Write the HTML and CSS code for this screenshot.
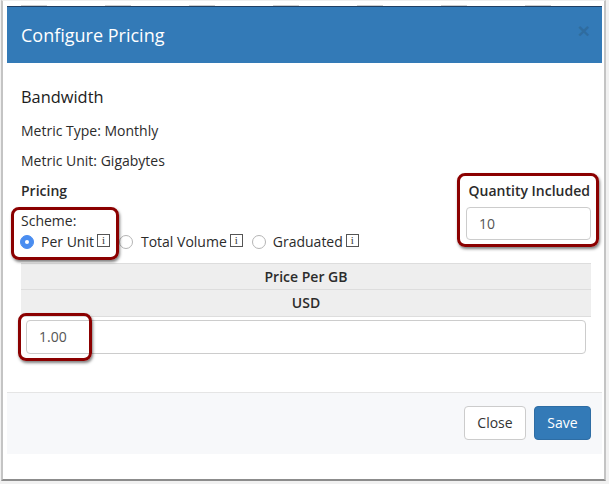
FILE: index.html
```html
<!DOCTYPE html>
<html lang="en">
<head>
<meta charset="utf-8">
<title>Configure Pricing</title>
<link rel="stylesheet" href="styles.css">
</head>
<body>
<div class="frame">
  <div class="modal">
    <div class="backdrop-bits"></div>
    <div class="backdrop-line"></div>
    <header class="modal-header">
      <h1 class="modal-title">Configure Pricing</h1>
      <span class="close-x">×</span>
    </header>
    <main class="modal-body">
      <h2 class="metric-name">Bandwidth</h2>
      <p class="line">Metric Type: Monthly</p>
      <p class="line">Metric Unit: Gigabytes</p>
      <div class="pricing-row">
        <div class="scheme-col">
          <div class="bold pricing-title">Pricing</div>
          <div class="scheme-label">Scheme:</div>
          <div class="radios">
            <span class="radio-item first"><span class="radio checked"></span><span class="radio-text">Per Unit</span><span class="info">i</span></span>
            <span class="radio-item second"><span class="radio"></span><span class="radio-text">Total Volume</span><span class="info">i</span></span>
            <span class="radio-item third"><span class="radio"></span><span class="radio-text">Graduated</span><span class="info">i</span></span>
          </div>
        </div>
        <div class="qty-col">
          <div class="bold qty-label">Quantity Included</div>
          <div class="input qty-input">10</div>
        </div>
      </div>
      <div class="table-head">Price Per GB</div>
      <div class="table-head second-head">USD</div>
      <div class="price-cell"><div class="input price-input">1.00</div></div>
    </main>
    <footer class="modal-footer">
      <button class="btn btn-close">Close</button>
      <button class="btn btn-save">Save</button>
    </footer>
  </div>
  <div class="callout callout-scheme"></div>
  <div class="callout callout-qty"></div>
  <div class="callout callout-price"></div>
</div>
</body>
</html>
```
FILE: styles.css
```css
* { box-sizing: border-box; }
html, body { margin: 0; padding: 0; }
body {
  width: 609px;
  height: 484px;
  background: #f1f1f1;
  font-family: "Open Sans", sans-serif;
  font-size: 14px;
  color: #2b2b2b;
  overflow: hidden;
}
.frame {
  position: relative;
  width: 605px;
  height: 481px;
  margin-left: 1px;
  background: #fff;
  border-left: 2px solid #c4c4c4;
  border-right: 2px solid #c4c4c4;
  border-bottom: 2px solid #8c8c8c;
  border-top: 1px solid #eee;
  padding: 4px 2px 0 4px;
}
.modal { width: 595px; }
.backdrop-bits {
  height: 1px;
  background: repeating-linear-gradient(90deg, #fff 0, #fff 14px, #d0d0d0 14px, #d0d0d0 40px, #fff 40px, #fff 84px);
}
.backdrop-line { height: 1px; background: #1f3f63; }
.modal-header {
  height: 56px;
  background: #337ab7;
  padding: 0 14px;
  display: flex;
  align-items: center;
  justify-content: space-between;
  color: #fff;
}
.modal-title { margin: 0; font-size: 18px; font-weight: 400; line-height: 26px; }
.close-x { font-family: "Liberation Sans", sans-serif; font-size: 21px; font-weight: 700; color: #2f6c9f; line-height: 1; margin-bottom: 9px; margin-right: -2px; }
.modal-body { padding: 24px 11px 0 14px; height: 329px; }
.metric-name { margin: 0 0 14px; font-size: 16.4px; font-weight: 400; line-height: 20px; color: #1c1c1c; }
.line { margin: 0 0 10px; line-height: 20px; }
.bold { font-weight: 600; }
.pricing-row { display: flex; justify-content: space-between; height: 82px; }
.pricing-title { line-height: 20px; margin-bottom: 10px; }
.scheme-label { line-height: 20px; }
.radios { display: flex; align-items: center; height: 22px; }
.radio-item { display: flex; align-items: center; }
.first { margin-left: -1px; }
.second { margin-left: 9px; }
.third { margin-left: 9px; }
.radio {
  width: 14px; height: 14px; border-radius: 50%;
  border: 1px solid #b5b5b5; background: #fff;
  margin-right: 7px; flex: none;
}
.second .radio { margin-right: 8px; }
.radio.checked {
  background: #4a8df0; border-color: #4a8df0;
  display: flex; align-items: center; justify-content: center;
}
.radio.checked::after { content: ""; width: 4px; height: 4px; border-radius: 50%; background: #fff; }
.radio-text { line-height: 20px; }
.info {
  width: 13px; height: 13px; margin-left: 3px; margin-top: -3px;
  border: 1px solid #555; font-family: "Liberation Serif", serif;
  font-size: 11px; line-height: 11px; text-align: center; color: #333;
}
.qty-col { width: 125px; display: flex; flex-direction: column; align-items: flex-end; }
.qty-label { line-height: 20px; margin-right: 1px; white-space: nowrap; }
.input {
  border: 1px solid #ccc; border-radius: 4px; background: #fff;
  color: #555; line-height: 20px; padding: 6px 12px;
}
.qty-input { width: 125px; height: 33px; margin-top: 6px; }
.table-head {
  height: 26px; background: #eee; border-top: 1px solid #ddd;
  text-align: center; font-weight: 600; line-height: 25px;
}
.second-head { border-bottom: 1px solid #ddd; height: 28px; line-height: 26px; }
.price-cell { padding: 3px 5px 0; }
.price-input { height: 34px; }
.modal-footer {
  height: 62px; border-top: 1px solid #e5e5e5; background: #f7f8fa;
  display: flex; justify-content: flex-end; align-items: center; gap: 8px; padding: 0 11px 1px 0;
}
.btn {
  font: 14px/20px "Open Sans", sans-serif; height: 34px; border-radius: 4px; padding: 0; border: 1px solid #ccc;
}
.btn-close { width: 62px; background: #fff; color: #333; }
.btn-save { width: 57px; background: #337ab7; border-color: #2e6da4; color: #fff; }
.callout {
  position: absolute;
  border: 3px solid #8b0000;
  border-radius: 8px;
  box-shadow: 1px 2px 3px rgba(0,0,0,.5);
}
.callout-scheme { left: 8px; top: 206px; width: 108px; height: 53px; }
.callout-qty { left: 454px; top: 172px; width: 142px; height: 74px; }
.callout-price { left: 15px; top: 312px; width: 74px; height: 48px; }
```
